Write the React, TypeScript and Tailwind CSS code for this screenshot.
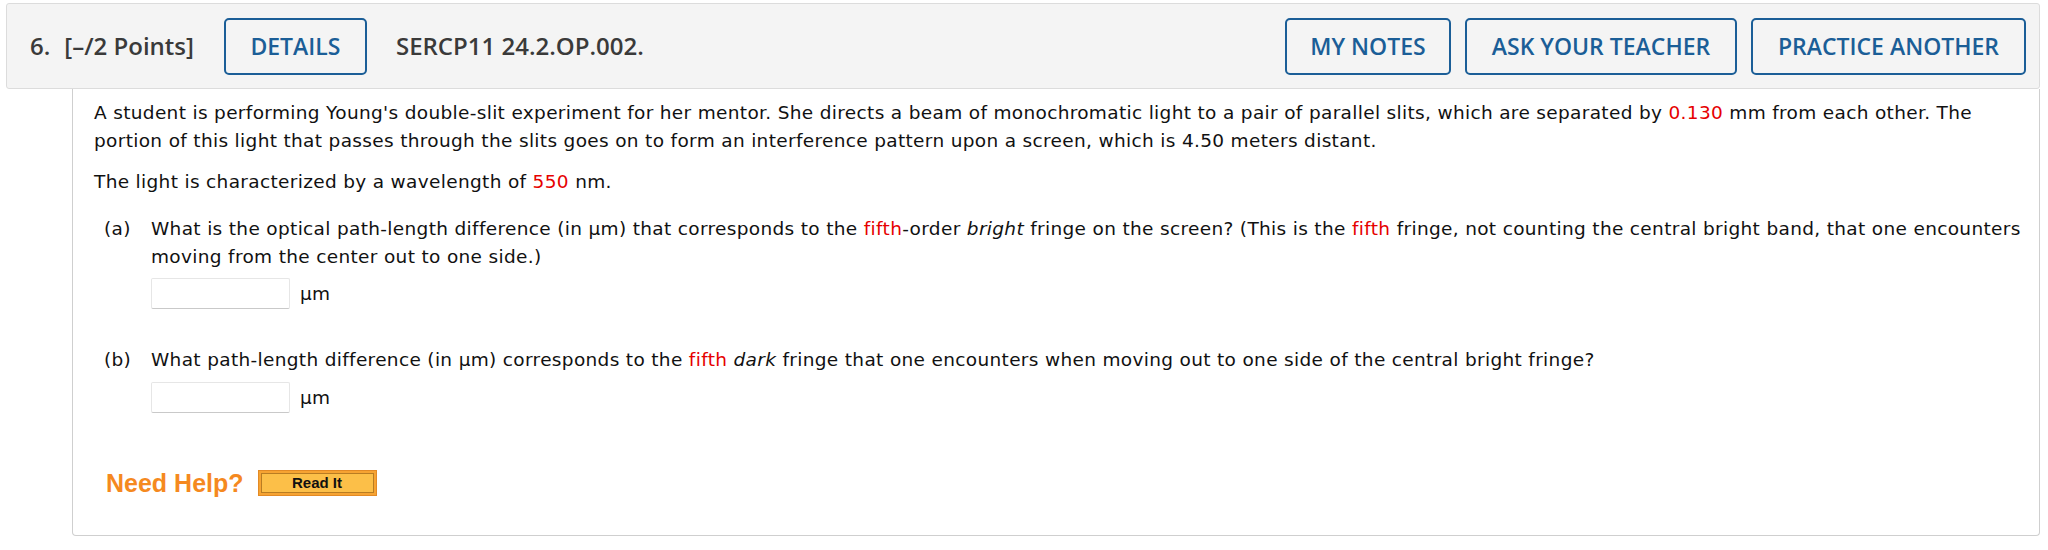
import React from "react";

const Red = ({ children }: { children: React.ReactNode }) => (
  <span className="text-[#e60000]">{children}</span>
);

const HeaderButton = ({ label, w }: { label: string; w: string }) => (
  <div
    className={`${w} h-[57px] flex items-center justify-center border-2 border-[#1b5e97] rounded-[5px] text-[#1b5e97] text-[23px] font-semibold`}
  >
    {label}
  </div>
);

const AnswerInput = () => (
  <div className="flex items-center gap-[10px]">
    <div className="w-[139px] h-[31px] bg-white border border-[#e6e6e6] border-b-[#c9c9c9] rounded-[2px]" />
    <span>µm</span>
  </div>
);

export default function App() {
  return (
    <div className="w-[2048px] h-[550px] bg-white pt-[3px] pl-[6px] pr-[8px]">
      <div className="flex items-center h-[86px] border border-[#dcdcdc] rounded-[3px] bg-[#f4f4f4] pl-[23px] pr-[13px] font-['Open_Sans',sans-serif]">
        <span className="text-[24px] font-semibold text-[#3a3a3a]">6.</span>
        <span className="ml-[14px] text-[24px] font-semibold text-[#3a3a3a]">[–/2 Points]</span>
        <div className="ml-[30px]">
          <HeaderButton label="DETAILS" w="w-[143px]" />
        </div>
        <span className="ml-[29px] text-[24px] font-semibold text-[#3a3a3a]">SERCP11 24.2.OP.002.</span>
        <div className="ml-auto flex gap-[14px]">
          <HeaderButton label="MY NOTES" w="w-[166px]" />
          <HeaderButton label="ASK YOUR TEACHER" w="w-[272px]" />
          <HeaderButton label="PRACTICE ANOTHER" w="w-[275px]" />
        </div>
      </div>

      <div className="ml-[66px] h-[447px] border-x border-b border-[#cfcfcf] rounded-b-[4px] pl-[21px] pr-[10px] pt-[10px] font-['DejaVu_Sans',sans-serif] text-[18.5px] leading-[28px] tracking-[0.33px] text-[#111]">
        <p>
          A student is performing Young's double-slit experiment for her mentor. She directs a beam of
          monochromatic light to a pair of parallel slits, which are separated by <Red>0.130</Red> mm from
          each other. The portion of this light that passes through the slits goes on to form an
          interference pattern upon a screen, which is 4.50 meters distant.
        </p>
        <p className="mt-[13px]">
          The light is characterized by a wavelength of <Red>550</Red> nm.
        </p>

        <div className="mt-[19px] ml-[10px] flex">
          <span className="w-[47px] shrink-0">(a)</span>
          <div className="flex-1">
            <p>
              What is the optical path-length difference (in µm) that corresponds to the{" "}
              <Red>fifth</Red>-order <i>bright</i> fringe on the screen? (This is the <Red>fifth</Red>{" "}
              fringe, not counting the central bright band, that one encounters moving from the center
              out to one side.)
            </p>
            <div className="mt-[7px]">
              <AnswerInput />
            </div>
          </div>
        </div>

        <div className="mt-[37px] ml-[10px] flex">
          <span className="w-[47px] shrink-0">(b)</span>
          <div className="flex-1">
            <p>
              What path-length difference (in µm) corresponds to the <Red>fifth</Red> <i>dark</i> fringe
              that one encounters when moving out to one side of the central bright fringe?
            </p>
            <div className="mt-[8px]">
              <AnswerInput />
            </div>
          </div>
        </div>

        <div className="mt-[56px] ml-[12px] flex items-center gap-[14px] tracking-normal">
          <span className="font-['Liberation_Sans',sans-serif] font-bold text-[25px] leading-[28px] text-[#f5891f]">
            Need Help?
          </span>
          <div className="w-[119px] h-[26px] bg-[#f6a332] border border-[#e38a25] p-[2px]">
            <div className="w-full h-full bg-[#fcbf48] border border-[#b97c22] flex items-center justify-center font-['Liberation_Sans',sans-serif] font-bold text-[15px] text-[#111]">
              Read It
            </div>
          </div>
        </div>
      </div>
    </div>
  );
}
